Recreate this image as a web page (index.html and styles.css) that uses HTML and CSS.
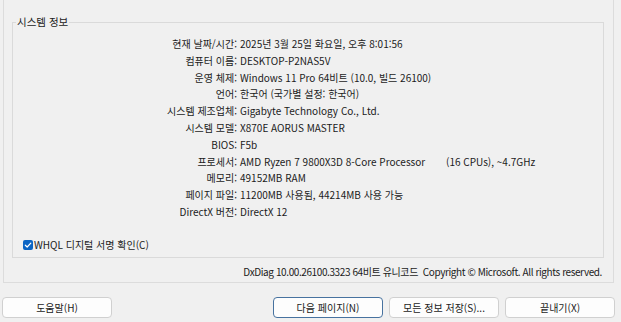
FILE: index.html
```html
<!DOCTYPE html>
<html lang="ko">
<head>
<meta charset="utf-8">
<link rel="stylesheet" href="styles.css">
</head>
<body>
<div class="panel">
  <fieldset class="group">
    <legend class="group-title">시스템 정보</legend>
    <div class="rows">
      <div class="label">현재 날짜/시간:</div><div class="value">2025년 3월 25일 화요일, 오후 8:01:56</div>
      <div class="label">컴퓨터 이름:</div><div class="value">DESKTOP-P2NAS5V</div>
      <div class="label">운영 체제:</div><div class="value">Windows 11 Pro 64비트 (10.0, 빌드 26100)</div>
      <div class="label">언어:</div><div class="value">한국어 (국가별 설정: 한국어)</div>
      <div class="label">시스템 제조업체:</div><div class="value">Gigabyte Technology Co., Ltd.</div>
      <div class="label">시스템 모델:</div><div class="value">X870E AORUS MASTER</div>
      <div class="label">BIOS:</div><div class="value">F5b</div>
      <div class="label">프로세서:</div><div class="value"><span class="cpu">AMD Ryzen 7 9800X3D 8-Core Processor</span><span>(16 CPUs), ~4.7GHz</span></div>
      <div class="label">메모리:</div><div class="value">49152MB RAM</div>
      <div class="label">페이지 파일:</div><div class="value">11200MB 사용됨, 44214MB 사용 가능</div>
      <div class="label">DirectX 버전:</div><div class="value">DirectX 12</div>
    </div>
    <label class="check-row">
      <span class="checkbox"><svg viewBox="0 0 10 10" width="10" height="10"><path d="M2.3 5.2 L4.2 7 L7.8 3.2" fill="none" stroke="#fff" stroke-width="1.2" stroke-linecap="round" stroke-linejoin="round"/></svg></span>
      <span>WHQL 디지털 서명 확인(C)</span>
    </label>
  </fieldset>
  <div class="footer">DxDiag 10.00.26100.3323 64비트 유니코드&nbsp; Copyright © Microsoft. All rights reserved.</div>
</div>
<div class="buttons">
  <button class="btn">도움말(H)</button>
  <div class="spacer"></div>
  <button class="btn btn-default">다음 페이지(N)</button>
  <button class="btn">모든 정보 저장(S)...</button>
  <button class="btn">끝내기(X)</button>
</div>
</body>
</html>
```
FILE: styles.css
```css
html, body {
  margin: 0;
  padding: 0;
}
body {
  width: 621px;
  height: 322px;
  background: #f0f0f0;
  font-family: "Noto Sans CJK KR", sans-serif;
  font-size: 10px;
  color: #1b1b1b;
  overflow: hidden;
}
.panel {
  margin-left: 3px;
  width: 611px;
  height: 283px;
  border: 1px solid #dcdcdc;
  border-top: none;
  padding: 14px 9px 0 8px;
  box-sizing: border-box;
  display: flex;
  flex-direction: column;
}
.group {
  margin: 0;
  border: 1px solid #dadada;
  padding: 6px 0 0 0;
  height: 244px;
  box-sizing: border-box;
  min-width: 0;
}
.group-title {
  padding: 0 1px;
  margin-left: 3px;
  line-height: 16px;
  font-size: 10.5px;
}
.rows {
  display: grid;
  grid-template-columns: 224px 1fr;
  column-gap: 3px;
  line-height: 16.8px;
}
.label {
  text-align: right;
  white-space: nowrap;
}
.value {
  white-space: nowrap;
}
.cpu {
  display: inline-block;
  width: 206px;
}
.check-row {
  display: flex;
  align-items: center;
  gap: 1px;
  margin: 16px 0 0 10px;
  line-height: 16px;
}
.checkbox {
  width: 10px;
  height: 10px;
  border-radius: 2px;
  background: #0a64c4;
  display: flex;
}
.footer {
  margin-top: 6px;
  padding-right: 2px;
  text-align: right;
  line-height: 16px;
  letter-spacing: -0.4px;
}
.buttons {
  display: flex;
  padding: 14px 6px 0 2px;
  gap: 6px;
}
.spacer {
  flex: 1;
}
.btn {
  width: 110px;
  height: 21px;
  margin: 0;
  padding: 0;
  border: 1px solid #d0d0d0;
  border-radius: 4px;
  background: #fdfdfd;
  font-family: inherit;
  font-size: 10px;
  color: #1b1b1b;
}
.btn-default {
  border-color: #47729f;
}
```
